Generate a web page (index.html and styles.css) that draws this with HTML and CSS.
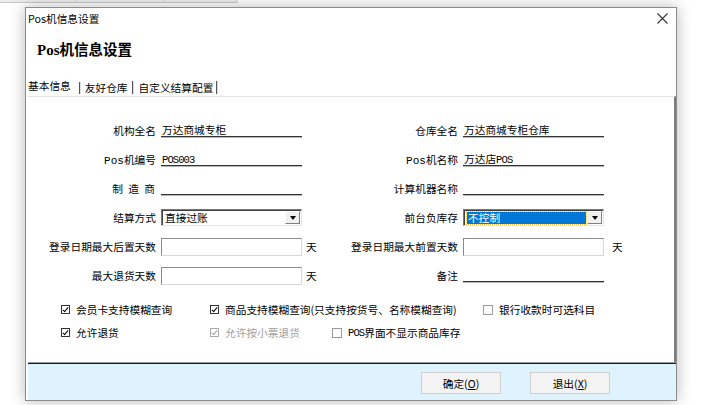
FILE: index.html
```html
<!DOCTYPE html>
<html lang="zh-CN">
<head>
<meta charset="utf-8">
<title>Pos机信息设置</title>
<link rel="stylesheet" href="styles.css">
</head>
<body>
<div class="topstrip">
  <span class="seg s1"></span><span class="seg s2"></span><span class="seg s3"></span>
</div>
<div class="dialog">
  <div class="titlebar">
    <span class="title-text">Pos机信息设置</span>
    <svg class="close" width="11" height="11" viewBox="0 0 11 11"><path d="M0.5 0.5 L10.5 10.5 M10.5 0.5 L0.5 10.5" stroke="#333" stroke-width="1.1" fill="none"/></svg>
  </div>
  <div class="heading"><span class="pos-serif">Pos</span>机信息设置</div>
  <div class="tabs">
    <div class="tab t1">基本信息</div>
    <div class="tab t2">友好仓库</div>
    <div class="tab t3">自定义结算配置</div>
  </div>
  <div class="panel">
    <div class="form">
      <div class="lbl">机构全名</div>
      <div class="uline">万达商城专柜</div>
      <div class="suf"></div>
      <div class="lbl">仓库全名</div>
      <div class="uline">万达商城专柜仓库</div>
      <div class="suf"></div>

      <div class="lbl"><span class="mono">Pos</span>机编号</div>
      <div class="uline"><span class="mono small">POS003</span></div>
      <div class="suf"></div>
      <div class="lbl"><span class="mono">Pos</span>机名称</div>
      <div class="uline">万达店<span class="mono small">POS</span></div>
      <div class="suf"></div>

      <div class="lbl spaced">制 造 商</div>
      <div class="uline"></div>
      <div class="suf"></div>
      <div class="lbl">计算机器名称</div>
      <div class="uline"></div>
      <div class="suf"></div>

      <div class="lbl">结算方式</div>
      <div class="select"><span class="sel-text">直接过账</span><span class="dd"><span class="tri"></span></span></div>
      <div class="suf"></div>
      <div class="lbl">前台负库存</div>
      <div class="select focus"><span class="sel-text hl">不控制</span><span class="dd"><span class="tri"></span></span></div>
      <div class="suf"></div>

      <div class="lbl">登录日期最大后置天数</div>
      <div class="input"></div>
      <div class="suf">天</div>
      <div class="lbl">登录日期最大前置天数</div>
      <div class="input"></div>
      <div class="suf wide">天</div>

      <div class="lbl">最大退货天数</div>
      <div class="input"></div>
      <div class="suf">天</div>
      <div class="lbl">备注</div>
      <div class="uline"></div>
      <div class="suf"></div>
    </div>

    <div class="checks">
      <div class="crow">
        <label class="chk w1"><span class="box on"></span>会员卡支持模糊查询</label>
        <label class="chk w2"><span class="box on"></span>商品支持模糊查询(只支持按货号、名称模糊查询)</label>
        <label class="chk"><span class="box"></span>银行收款时可选科目</label>
      </div>
      <div class="crow">
        <label class="chk w1"><span class="box on"></span>允许退货</label>
        <label class="chk w3 disabled"><span class="box on dis"></span>允许按小票退货</label>
        <label class="chk"><span class="box"></span><span class="mono small">POS</span>界面不显示商品库存</label>
      </div>
    </div>
  </div>
  <div class="footer">
    <button class="btn">确定(<u>O</u>)</button>
    <button class="btn">退出(<u>X</u>)</button>
  </div>
</div>
</body>
</html>
```

FILE: styles.css
```css
* { box-sizing: border-box; }
html, body {
  margin: 0;
  padding: 0;
  width: 718px;
  height: 405px;
  overflow: hidden;
  background: #ffffff;
  font-family: "Noto Sans CJK SC", "Noto Sans", sans-serif;
  font-size: 10.7px;
  color: #000;
}
.topstrip {
  width: 238px;
  height: 3px;
  background: #ececec;
  border-bottom: 1px solid #c8c8c8;
  display: flex;
}
.seg { height: 3px; border-right: 1px solid #c8c8c8; }
.s1 { width: 76px; }
.s2 { width: 89px; }
.s3 { width: 72px; }

.dialog {
  margin: 4px 0 0 25px;
  width: 652px;
  height: 394px;
  background: #fff;
  border: 1px solid #8c8c8c;
  box-shadow: 0 0 14px rgba(0,0,0,0.28);
  display: flex;
  flex-direction: column;
}
.titlebar {
  height: 21px;
  display: flex;
  align-items: center;
  justify-content: space-between;
  padding: 0 8px 0 2px;
  flex: none;
}
.title-text { line-height: 21px; }
.close { display: block; }

.heading {
  height: 49px;
  padding: 10px 0 0 11px;
  line-height: 20px;
  font-size: 14.5px;
  font-weight: bold;
  flex: none;
}
.pos-serif { font-family: "Liberation Serif", serif; font-weight: bold; font-size: 15px; }

.tabs {
  height: 18px;
  display: flex;
  align-items: stretch;
  flex: none;
}
.tab {
  border-right: 1px solid #555;
  box-shadow: 1px 0 0 #ddd;
  margin: 3px 0 2px 0;
  line-height: 13px;
}
.t1 { padding: 0 9px 0 2px; margin-top: 0; line-height: 16px; border-right: none; box-shadow: none; position: relative; }
.t1::after { content: ""; position: absolute; right: 0; top: 4px; bottom: 0; border-right: 1px solid #555; box-shadow: 1px 0 0 #ddd; }
.t2 { padding: 0 4px 0 5px; }
.t3 { padding: 0 3px 0 6px; }

.panel {
  flex: 1;
  border-top: 1px solid #e2e2e2;
  border-right: 2px solid #7d7d7d;
  margin-left: 2px;
}
.form {
  margin-top: 19px;
  margin-left: -2px;
  display: grid;
  grid-template-columns: 135px 141px 25px 136px 141px 40px;
  grid-auto-rows: 29px;
  align-items: center;
}
.lbl {
  text-align: right;
  padding-right: 5px;
  white-space: nowrap;
}
.lbl.spaced { word-spacing: 3px; padding-right: 6px; }
.uline {
  height: 14px;
  line-height: 13px;
  border-bottom: 1px solid #333;
  box-shadow: 0 1px 0 #b8b8b8;
  padding-left: 1px;
  margin-bottom: 2px;
  white-space: nowrap;
}
.mono { font-family: "Liberation Mono", monospace; font-size: 11px; }
.mono.small { font-size: 10.5px; letter-spacing: -0.9px; }
.suf { padding-left: 4px; }
.suf.wide { padding-left: 8px; }

.select {
  height: 17px;
  display: flex;
  align-items: stretch;
  border-top: 1px solid #7a7a7a;
  border-left: 1px solid #7a7a7a;
  border-right: 1px solid #e6e6e6;
  border-bottom: 1px solid #e6e6e6;
  box-shadow: inset 1px 1px 0 #404040;
  padding: 2px 2px 1px 3px;
  background: #fff;
}
.sel-text { flex: 1; line-height: 12px; white-space: nowrap; }
.sel-text.hl {
  background: #0078d7;
  color: #fff;
  outline: 1px dotted #f4c04a;
  margin-right: 1px;
  padding-left: 1px;
}
.dd {
  width: 15px;
  background: #f0f0f0;
  border-top: 1px solid #fff;
  border-left: 1px solid #fff;
  border-right: 1px solid #808080;
  border-bottom: 1px solid #808080;
  display: flex;
  align-items: center;
  justify-content: center;
  margin: -1px -1px 0 0;
}
.tri {
  width: 0; height: 0;
  border-left: 3.5px solid transparent;
  border-right: 3.5px solid transparent;
  border-top: 4px solid #000;
}
.input {
  height: 18px;
  border-top: 1px solid #8a8a8a;
  border-left: 1px solid #8a8a8a;
  border-right: 1px solid #d8d8d8;
  border-bottom: 1px solid #d8d8d8;
  background: #fff;
}

.checks { margin-top: 8px; }
.crow { display: flex; height: 23px; align-items: center; padding-left: 33px; }
.chk { display: flex; align-items: center; white-space: nowrap; }
.w1 { width: 149px; }
.w2 { width: 273px; }
.w3 { width: 122px; }
.box {
  width: 9px; height: 9px;
  border: 1px solid #333;
  margin-right: 6px;
  background: #fff;
  position: relative;
  flex: none;
}
.box.on::after {
  content: "";
  position: absolute;
  left: 2px; top: 0px;
  width: 2px; height: 5px;
  border-right: 1.6px solid #000;
  border-bottom: 1.6px solid #000;
  transform: rotate(40deg);
}
.box:not(.on) { border-color: #9a9a9a; width: 10px; height: 10px; }
.box.dis { border-color: #aaa; }
.box.dis::after { border-color: #a0a0a0; }
.disabled { color: #a0a0a0; }

.footer {
  height: 38px;
  flex: none;
  border-top: 1px solid #9a9a9a;
  box-shadow: inset 0 1px 0 #1a1a1a;
  background: #dff3fe;
  margin-left: 2px;
  display: flex;
  align-items: flex-start;
  padding: 9px 0 0 393px;
  gap: 29px;
}
.btn {
  width: 80px;
  height: 22px;
  background: #f3f3f3;
  border: 1px solid #cfcfcf;
  font-family: "Noto Sans CJK SC", sans-serif;
  font-size: 10.7px;
  padding: 0;
  color: #000;
}
.btn u { text-decoration: underline; }
```
